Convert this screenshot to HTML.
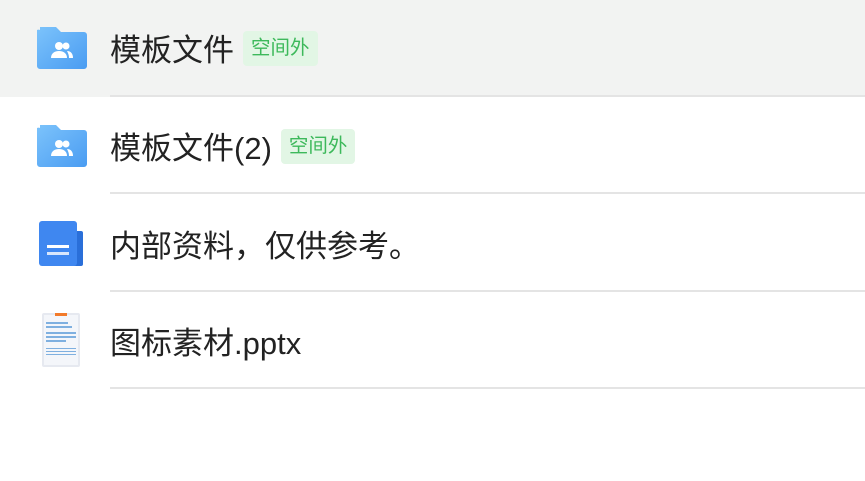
<!DOCTYPE html>
<html><head><meta charset="utf-8"><style>
body{margin:0;width:865px;height:481px;background:#fff;font-family:"Liberation Sans","Noto Sans CJK SC",sans-serif;overflow:hidden;position:relative}
.row{position:absolute;left:0;width:865px;height:97px}
.line{position:absolute;left:110px;right:0;bottom:0;height:2px;background:#e4e4e4}
.t{position:absolute;left:110px;font-size:31px;color:#222;line-height:40px}
.tag{display:inline-block;vertical-align:middle;margin-left:9px;background:#e2f6e5;color:#3db95b;font-size:19.5px;line-height:35px;padding:0 8px;border-radius:4px;position:relative;top:-4px}
svg{position:absolute}
</style></head><body>
<div class="row" style="top:0;background:#f2f3f2"><div class="line"></div>
<svg style="left:37px;top:27px" width="50" height="42" viewBox="0 0 50 42"><defs><linearGradient id="g" x1="0" y1="0" x2="1" y2="1"><stop offset="0" stop-color="#7cc3fb"/><stop offset="1" stop-color="#4a9cf2"/></linearGradient></defs><path d="M3 0h16l5 5h23a3 3 0 0 1 3 3v31a3 3 0 0 1-3 3H3a3 3 0 0 1-3-3V3a3 3 0 0 1 3-0z" fill="url(#g)"/><circle cx="22" cy="19" r="4" fill="#fff"/><path d="M14 31c0-5 4-7 8-7s8 2 8 7z" fill="#fff"/><circle cx="29" cy="19" r="3.5" fill="#fff"/><path d="M30 24c4 0 6 3 6 7h-4c0-3-1-5-2-7z" fill="#fff"/></svg>
<div class="t" style="top:31px">模板文件<span class="tag">空间外</span></div></div>
<div class="row" style="top:97px"><div class="line"></div>
<svg style="left:37px;top:28px" width="50" height="42" viewBox="0 0 50 42"><path d="M3 0h16l5 5h23a3 3 0 0 1 3 3v31a3 3 0 0 1-3 3H3a3 3 0 0 1-3-3V3a3 3 0 0 1 3-0z" fill="url(#g)"/><circle cx="22" cy="19" r="4" fill="#fff"/><path d="M14 31c0-5 4-7 8-7s8 2 8 7z" fill="#fff"/><circle cx="29" cy="19" r="3.5" fill="#fff"/><path d="M30 24c4 0 6 3 6 7h-4c0-3-1-5-2-7z" fill="#fff"/></svg>
<div class="t" style="top:32px">模板文件(2)<span class="tag">空间外</span></div></div>
<div class="row" style="top:195px"><div class="line"></div>
<svg style="left:39px;top:26px" width="46" height="45" viewBox="0 0 46 45"><rect x="30" y="10" width="14" height="35" rx="2" fill="#2a6fd9"/><rect x="0" y="0" width="38" height="45" rx="3" fill="#3f87f0"/><rect x="8" y="24" width="22" height="3" fill="#fff"/><rect x="8" y="31" width="22" height="3" fill="#d8e6fc"/></svg>
<div class="t" style="top:32px">内部资料，仅供参考。</div></div>
<div class="row" style="top:292px"><div class="line"></div>
<svg style="left:41px;top:20px" width="40" height="56" viewBox="0 0 40 56"><rect x="1" y="1" width="38" height="54" rx="2" fill="#e6e9f0"/><rect x="3" y="3" width="34" height="50" fill="#f4f6fa"/><rect x="14" y="1" width="12" height="3" fill="#f27a2a"/><g fill="#7fb0e0"><rect x="5" y="10" width="22" height="2"/><rect x="5" y="14" width="26" height="2"/><rect x="5" y="20" width="30" height="2"/><rect x="5" y="24" width="30" height="2"/><rect x="5" y="28" width="20" height="2"/><rect x="5" y="36" width="30" height="1"/><rect x="5" y="39" width="30" height="1"/><rect x="5" y="42" width="30" height="1"/></g></svg>
<div class="t" style="top:32px">图标素材.pptx</div></div>
</body></html>
